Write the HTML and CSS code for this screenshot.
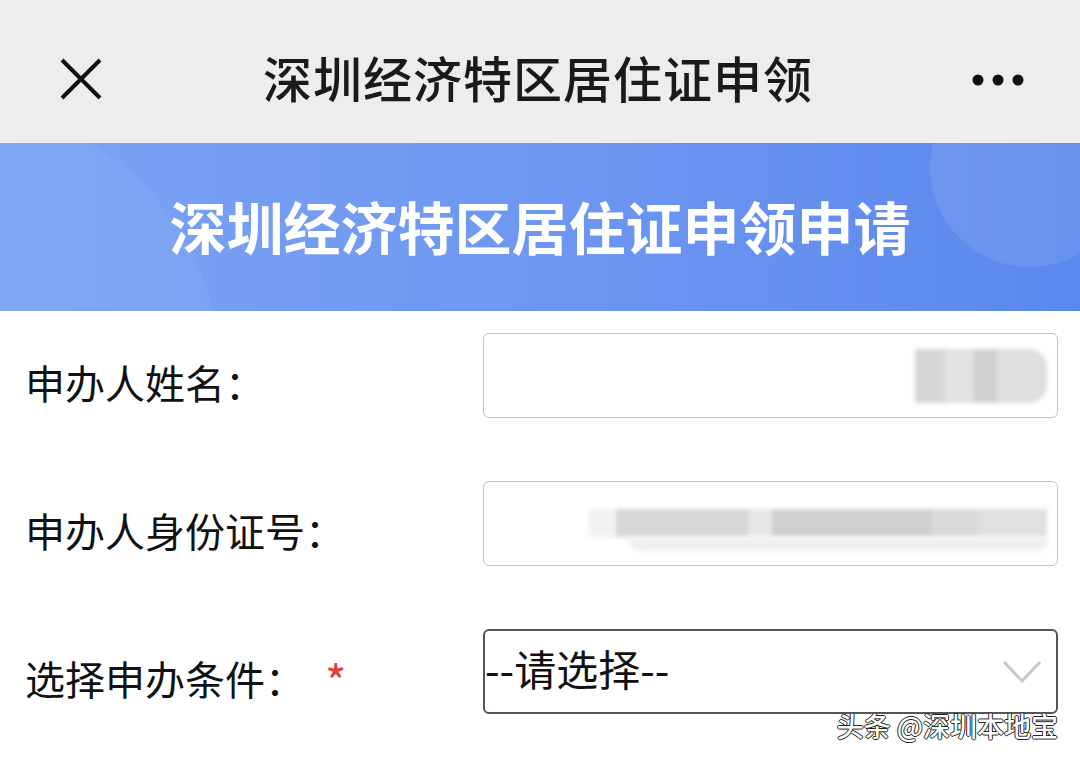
FILE: index.html
```html
<!DOCTYPE html>
<html lang="zh-CN">
<head>
    <meta charset="UTF-8">
    <meta name="viewport" content="width=device-width, initial-scale=1.0">
    <title>深圳经济特区居住证申领</title>
    <link rel="stylesheet" href="styles.css">
</head>
<body>
    <div class="top-bar">
        <svg class="close-icon" width="44" height="44" viewBox="0 0 44 44">
            <path d="M3 3 L41 41 M41 3 L3 41" stroke="#111" stroke-width="4" fill="none"/>
        </svg>
        <div class="top-title">深圳经济特区居住证申领</div>
        <svg class="more-icon" width="56" height="14" viewBox="0 0 56 14">
            <circle cx="7" cy="7" r="5.5" fill="#111"/>
            <circle cx="27" cy="7" r="5.5" fill="#111"/>
            <circle cx="47" cy="7" r="5.5" fill="#111"/>
        </svg>
    </div>

    <div class="banner">
        <div class="circle circle-left"></div>
        <div class="circle circle-right"></div>
        <h1>深圳经济特区居住证申领申请</h1>
    </div>

    <form class="apply-form">
        <div class="form-row">
            <label>申办人姓名：</label>
            <div class="field">
                <div class="blur blur-name"></div>
            </div>
        </div>
        <div class="form-row">
            <label>申办人身份证号：</label>
            <div class="field">
                <div class="blur blur-id"></div>
                <div class="blur blur-id-low"></div>
            </div>
        </div>
        <div class="form-row">
            <label>选择申办条件：<span class="required">*</span></label>
            <div class="field select">
                <span class="select-text">--请选择--</span>
                <svg class="chevron" width="40" height="26" viewBox="0 0 40 26">
                    <path d="M2 3 L20 22 L38 3" stroke="#c9c9c9" stroke-width="3" fill="none"/>
                </svg>
            </div>
        </div>
    </form>

    <div class="watermark">头条 @深圳本地宝</div>
</body>
</html>
```

FILE: styles.css
```css
* {
    margin: 0;
    padding: 0;
    box-sizing: border-box;
    font-family: "Noto Sans CJK SC", "Noto Sans", sans-serif;
}

body {
    background: #fff;
    color: #111;
    width: 1080px;
    height: 761px;
    overflow: hidden;
    position: relative;
}

.top-bar {
    height: 143px;
    background: #ededed;
    display: flex;
    align-items: center;
    padding: 16px 53px 0 59px;
}

.close-icon {
    flex: none;
    margin-top: -1px;
}

.top-title {
    flex: 1;
    text-align: center;
    font-size: 49px;
    font-weight: 500;
    color: #1a1a1a;
    letter-spacing: 1px;
    margin-left: 2px;
    margin-top: -6px;
}

.more-icon {
    flex: none;
}

.banner {
    height: 168px;
    background: linear-gradient(90deg, #7ca3f4 0%, #6d97f1 50%, #5b88ee 100%);
    display: flex;
    justify-content: center;
    align-items: center;
    position: relative;
    overflow: hidden;
}

.circle {
    position: absolute;
    border-radius: 50%;
}

.circle-left {
    width: 540px;
    height: 540px;
    left: -320px;
    top: -40px;
    background: rgba(255, 255, 255, 0.05);
}

.circle-right {
    width: 200px;
    height: 200px;
    left: 930px;
    top: -76px;
    background: rgba(255, 255, 255, 0.09);
}

.banner h1 {
    position: relative;
    color: #fff;
    font-size: 57px;
    font-weight: 700;
    letter-spacing: 0;
    margin-top: -4px;
}

.apply-form {
    padding: 22px 22px 0 25px;
    display: flex;
    flex-direction: column;
    gap: 63px;
}

.form-row {
    display: flex;
    align-items: center;
    height: 85px;
}

.form-row label {
    width: 458px;
    font-size: 40px;
    color: #111;
    padding-top: 12px;
    display: flex;
    align-items: center;
}

.required {
    color: #e03c3c;
    font-size: 46px;
    margin-left: 20px;
    margin-top: 4px;
}

.field {
    flex: 1;
    height: 85px;
    border: 1.5px solid #c4c4c4;
    border-radius: 6px;
    position: relative;
    overflow: hidden;
}

.blur {
    position: absolute;
    background: #d9d9d9;
    filter: blur(2px);
}

.blur-name {
    right: 10px;
    top: 15px;
    width: 132px;
    height: 54px;
    border-radius: 0 18px 18px 0;
    background: linear-gradient(90deg, #d6d6d6 0 23%, #e2e2e2 23% 45%, #d0d0d0 45% 62%, #dedede 62%);
}

.blur-id {
    right: 10px;
    top: 27px;
    width: 458px;
    height: 28px;
    background: linear-gradient(90deg, #f2f2f2 0 6%, #d8d8d8 6% 35%, #e8e8e8 35% 40%, #d0d0d0 40% 75%, #dadada 75% 85%, #e0e0e0 85%);
}

.blur-id-low {
    right: 10px;
    top: 55px;
    width: 420px;
    height: 14px;
    background: #f1f1f1;
    border-radius: 0 0 12px 30px;
}

.select {
    border: 2px solid #555;
    display: flex;
    align-items: center;
    justify-content: space-between;
    padding: 0 14px 0 0;
}

.select-text {
    font-size: 42px;
    color: #111;
    margin-top: -8px;
}

.watermark {
    position: absolute;
    right: 22px;
    top: 706px;
    font-size: 27px;
    font-weight: 500;
    color: #fff;
    text-shadow: -1px 0 #222, 1px 0 #222, 0 -1px #222, 0 1px #222;
}
```
